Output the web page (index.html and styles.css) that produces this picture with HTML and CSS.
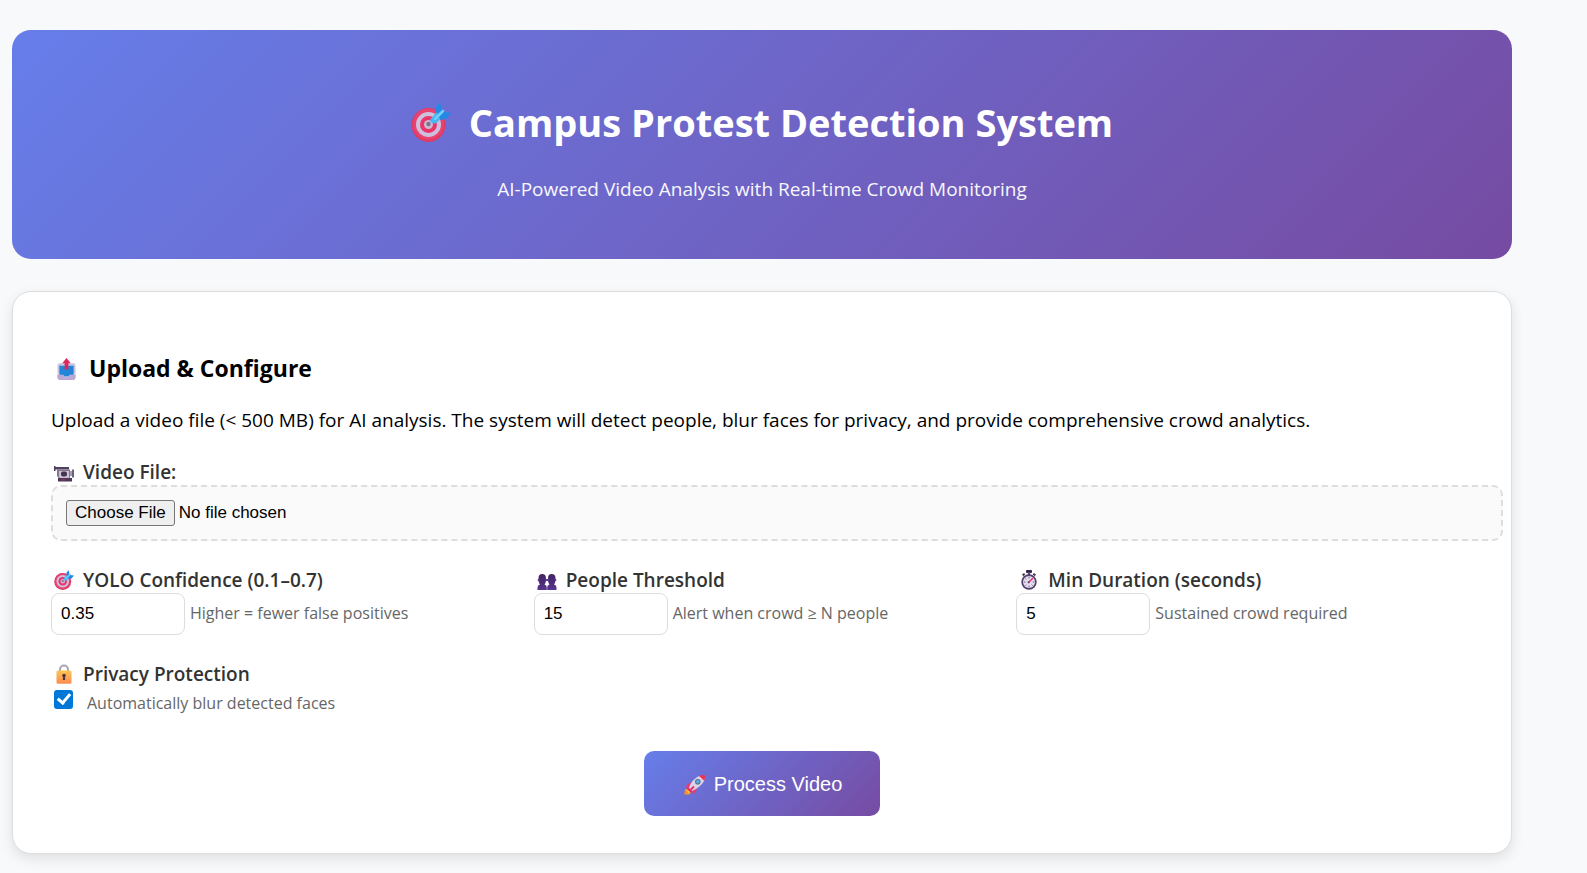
FILE: index.html
```html
<!DOCTYPE html>
<html lang="en">
<head>
<meta charset="utf-8">
<meta name="viewport" content="width=device-width, initial-scale=1">
<title>Campus Protest Detection System</title>
<link rel="stylesheet" href="styles.css">
</head>
<body>
<svg class="defs" aria-hidden="true">
  <defs>
    <linearGradient id="lockFill" x1="0" y1="0" x2="0" y2="1"><stop offset="0" stop-color="#fcc651"/><stop offset="1" stop-color="#fb8b52"/></linearGradient>
    <linearGradient id="peopleFill" x1="0" y1="0" x2="0" y2="1"><stop offset="0" stop-color="#432463"/><stop offset="1" stop-color="#57358c"/></linearGradient>
    <symbol id="target" viewBox="0 0 40 40">
      <circle cx="17.500" cy="23" r="17" fill="#dd3b63"/>
      <circle cx="17.500" cy="22" r="15.500" fill="#ea4270"/>
      <circle cx="17.500" cy="22.500" r="12.500" fill="#cdc0de"/>
      <circle cx="17.500" cy="22.500" r="8.500" fill="#ec3468"/>
      <circle cx="17.500" cy="22.500" r="4.500" fill="#c9b9d4"/>
      <circle cx="17.500" cy="22" r="2.200" fill="#7c7590"/>
      <path d="M20 16.500 28 7.500l6 5-8 8c-2 1.500-5 1-6-.500s-1-2.500 0-3.500z" fill="#47b7f3"/>
      <path d="M25 10V5.500L29 0l2 8-4 4z" fill="#2489e5"/>
      <path d="m28 15 4-5 8 1-5 6-5.500 1z" fill="#2489e5"/>
      <path d="m24 17 8-8" stroke="#70d0fa" stroke-width="2.500" stroke-linecap="round"/>
    </symbol>
    <symbol id="outbox" viewBox="0 0 20 24">
      <path d="M3 6h14q2.500 0 2.500 2.500V21q0 2.500-2.500 2.500H3Q.500 23.500.500 21V8.500Q.500 6 3 6z" fill="#c8c4df"/>
      <path d="M.500 18h6l1.500 2.500h4l1.500-2.500h6v3q0 2.500-2.500 2.500H3Q.500 23.500.500 21z" fill="#bca8d4"/>
      <path d="M1 17h6l1.500 3h3l1.500-3h6" fill="none" stroke="#e2ddef" stroke-width="1.200"/>
      <path d="M2.500 8.500h15V18h-4L12 20H8l-1.500-2h-4z" fill="#2385d9"/>
      <path d="M10 .500 14.500 6H12v6.500H8V6H5.500z" fill="#dd285e"/>
    </symbol>
    <symbol id="camera" viewBox="0 0 20 16">
      <path d="M0 0h1.500v1H15v2.500H1.500V5H0z" fill="#51415f"/>
      <path d="M3 3.500h13v9H5L3 10z" fill="#83778f"/>
      <path d="M5 5h10v7H6L5 11z" fill="#c9c2d2"/>
      <path d="M16 5h2v5h-2z" fill="#a79eb3"/><path d="M18 3.500h2v8h-2z" fill="#6e607e"/>
      <rect x="7" y="5.500" width="6" height="5" rx="2" fill="#45344f"/>
      <path d="M4 12h14v3.500H4z" fill="#493859"/><path d="M7 13h4v1.500H7z" fill="#8f3159"/>
    </symbol>
    <symbol id="people" viewBox="0 0 20 16">
      <g fill="url(#peopleFill)">
        <path d="M1.500 4Q1.500 0 5.200 0T9 4v3Q8.500 9.500 7.500 10.500q2.300.500 2.300 3V16H.500v-2.500q0-2.500 2.500-3Q2 9.500 1.500 7z"/>
        <path d="M11 4Q11 0 14.700 0t3.800 4v3q-.500 2.500-1.500 3.500 2.500.500 2.500 3V16h-9.300v-2.500q0-2.500 2.300-3Q11.500 9.500 11 7z"/>
      </g>
      <path d="M.800 6h1.500M8 6h4M17.700 6h1.500" stroke="#5b3a91" stroke-width="2"/>
    </symbol>
    <symbol id="watch" viewBox="0 0 17 20">
      <rect x="5.500" width="6" height="3" rx="1" fill="#33234a"/><path d="M7.300 2h2.400v3H7.300z" fill="#5a486e"/>
      <path d="m1.500 4.500 2-1.500 1.300 1.500-2 1.800zM15.500 4.500l-2-1.500-1.300 1.500 2 1.800z" fill="#48365c"/>
      <circle cx="8.500" cy="12" r="7.700" fill="#51406a"/><circle cx="8.500" cy="12" r="6" fill="#e3dcee"/>
      <path d="M8.500 6.800v1.500M8.500 15.700v1.500M3.300 12h1.500M12.200 12h1.500M4.900 8.400l.900.900M11.200 14.700l.900.900M4.900 15.600l.900-.900" stroke="#51406a" stroke-width=".8"/>
      <path d="m8 12.500 4-4" stroke="#e83469" stroke-width="1.500" stroke-linecap="round"/><circle cx="8.300" cy="12.200" r="1.100" fill="#655079"/>
    </symbol>
    <symbol id="lock" viewBox="0 0 16 20">
      <path d="M4 9V5.500a4 4 0 0 1 8 0V9" fill="none" stroke="#a9a2b9" stroke-width="2"/>
      <rect x=".5" y="6.500" width="15" height="13.300" rx="1.500" fill="url(#lockFill)"/>
      <circle cx="8" cy="11.500" r="1.800" fill="#4b3340"/><path d="M7.200 12h1.600l.4 4H6.800z" fill="#4b3340"/>
    </symbol>
    <symbol id="rocket" viewBox="0 0 21 20">
      <path d="M1 14h4l2 3-1 2.300Q3.500 20 .200 19.300z" fill="#f9902e"/><path d="m2.500 15 3 0 1 1.500-2 2z" fill="#fdc544"/>
      <path d="M7 8Q3 8 1.800 13l5-.500zM12.500 13q.500 4-3.500 6.500L8.200 14z" fill="#f1386e"/>
      <path d="M5 13Q7 5 15 1l5 .500.300 4Q17 12 8 16z" fill="#ddd3e6"/>
      <path d="M15 1q3-1.300 5.800-.800.500 3-.500 5.500z" fill="#ef3154"/>
      <path d="m3.500 12 5 5-2 .500-3-3z" fill="#e52a60"/><path d="m6 15.500 4-4" stroke="#ed2f68" stroke-width="2"/>
      <circle cx="13.800" cy="6.700" r="2.800" fill="#5c6d94"/><circle cx="13.800" cy="6.700" r="1.800" fill="#52aee9"/>
    </symbol>
  </defs>
</svg>
<main class="container">
  <header class="hero">
    <h1 class="hero-title"><svg class="hero-icon" aria-hidden="true"><use href="#target"/></svg>Campus Protest Detection System</h1>
    <p class="hero-text">AI-Powered Video Analysis with Real-time Crowd Monitoring</p>
  </header>
  <form class="card">
    <h2 class="card-title"><svg class="title-icon" aria-hidden="true"><use href="#outbox"/></svg>Upload &amp; Configure</h2>
    <p class="intro">Upload a video file (&lt; 500 MB) for AI analysis. The system will detect people, blur faces for privacy, and provide comprehensive crowd analytics.</p>
    <div class="group">
      <label class="label" for="video"><svg class="icon icon-low" aria-hidden="true"><use href="#camera"/></svg>Video File:</label>
      <input class="file" type="file" id="video">
    </div>
    <div class="grid">
      <div class="field">
        <label class="label" for="confidence"><svg class="icon" aria-hidden="true"><use href="#target"/></svg>YOLO Confidence (0.1–0.7)</label>
        <div class="row"><input class="number" type="text" inputmode="decimal" id="confidence" value="0.35"><small class="hint">Higher = fewer false positives</small></div>
      </div>
      <div class="field">
        <label class="label" for="threshold"><svg class="icon icon-low" aria-hidden="true"><use href="#people"/></svg>People Threshold</label>
        <div class="row"><input class="number" type="text" inputmode="numeric" id="threshold" value="15"><small class="hint">Alert when crowd ≥ N people</small></div>
      </div>
      <div class="field">
        <label class="label" for="duration"><svg class="icon" aria-hidden="true"><use href="#watch"/></svg>Min Duration (seconds)</label>
        <div class="row"><input class="number" type="text" inputmode="numeric" id="duration" value="5"><small class="hint">Sustained crowd required</small></div>
      </div>
      <div class="field">
        <label class="label" for="privacy"><svg class="icon" aria-hidden="true"><use href="#lock"/></svg>Privacy Protection</label>
        <div class="check-row"><input class="check" type="checkbox" id="privacy" checked><small class="hint">Automatically blur detected faces</small></div>
      </div>
    </div>
    <button class="submit" type="button"><svg class="submit-icon" aria-hidden="true"><use href="#rocket"/></svg>Process Video</button>
  </form>
</main>
</body>
</html>
```
FILE: styles.css
```css
body {
  margin: 0;
  background: #f8f9fb;
  color: #000;
  font-family: "Segoe UI", "Open Sans", "Noto Sans", sans-serif;
  font-size: 19px;
  line-height: 26px;
}

.defs {
  position: absolute;
  width: 0;
  height: 0;
}

.container {
  max-width: 1500px;
  margin: 0 75px 0 12px;
  padding: 30px 0 20px;
}

.hero {
  margin-bottom: 32px;
  padding: 62px 38px 57px;
  border-radius: 19px;
  background: linear-gradient(135deg, #667eea 0%, #764ba2 100%);
  color: #fff;
  text-align: center;
}

.hero-title {
  display: flex;
  justify-content: center;
  align-items: center;
  gap: 18px;
  margin: 0 0 24px;
  font-size: 38px;
  font-weight: 700;
  line-height: 60px;
}

.hero-icon {
  width: 40px;
  height: 40px;
}

.hero-text {
  margin: 0;
  opacity: 0.95;
}

.card {
  padding: 61px 38px 37px;
  border: 1px solid #ddd;
  border-radius: 19px;
  background: #fff;
  box-shadow: 0 5px 13px rgba(0, 0, 0, 0.1);
}

.card-title {
  display: flex;
  align-items: center;
  gap: 13px;
  margin: 0 0 23px;
  padding-left: 6px;
  font-size: 23px;
  font-weight: 700;
  line-height: 31px;
}

.title-icon {
  width: 19px;
  height: 24px;
}

.intro {
  margin: 0 0 26px;
}

.group {
  margin-bottom: 26px;
}

.label {
  display: flex;
  align-items: center;
  gap: 9px;
  padding-left: 3px;
  color: #333;
  font-weight: 600;
}

.icon {
  width: 20px;
  height: 20px;
}

.icon-low {
  height: 16px;
  padding-top: 4px;
}

.file {
  display: block;
  box-sizing: content-box;
  width: 100%;
  padding: 13px;
  border: 2px dashed #ddd;
  border-radius: 10px;
  background: #fafafa;
  font: 17px/26px "Liberation Sans", Arial, sans-serif;
}

.file::file-selector-button {
  box-sizing: border-box;
  height: 26px;
  margin-right: 4px;
  padding: 0 8px;
  border: 1px solid #767676;
  border-radius: 3px;
  background: #efefef;
  color: #000;
  font: inherit;
  line-height: 24px;
}

.grid {
  display: grid;
  grid-template-columns: repeat(3, 1fr);
  gap: 26px;
}

.row {
  display: flex;
  align-items: center;
  gap: 5px;
}

.number {
  box-sizing: border-box;
  width: 134px;
  height: 42px;
  padding: 0 9px;
  border: 1px solid #ddd;
  border-radius: 8px;
  background: #fff;
  color: #000;
  font: 17px "Liberation Sans", Arial, sans-serif;
}

.hint {
  color: #666;
  font-size: 16px;
  line-height: 22px;
}

.row .hint {
  padding-bottom: 2px;
}

.check-row {
  display: flex;
  align-items: flex-start;
  gap: 14px;
  padding: 3px 0 0 3px;
}

.check-row .hint {
  padding-top: 2px;
}

.check {
  appearance: none;
  width: 19px;
  height: 19px;
  margin: 0;
  border-radius: 3px;
  background: #0078d7;
}

.check:checked::before {
  content: "";
  display: block;
  box-sizing: border-box;
  width: 8px;
  height: 13px;
  margin: 1px 0 0 6px;
  border: solid #fff;
  border-width: 0 3px 3px 0;
  transform: rotate(40deg);
}

.submit {
  display: flex;
  justify-content: center;
  align-items: center;
  gap: 9px;
  margin: 37px auto 0;
  padding: 21px 38px 19px 40px;
  border: 0;
  border-radius: 10px;
  background: linear-gradient(135deg, #667eea 0%, #764ba2 100%);
  color: #fff;
  font: 20px/25px "Liberation Sans", Arial, sans-serif;
}

.submit-icon {
  width: 21px;
  height: 20px;
}
```
